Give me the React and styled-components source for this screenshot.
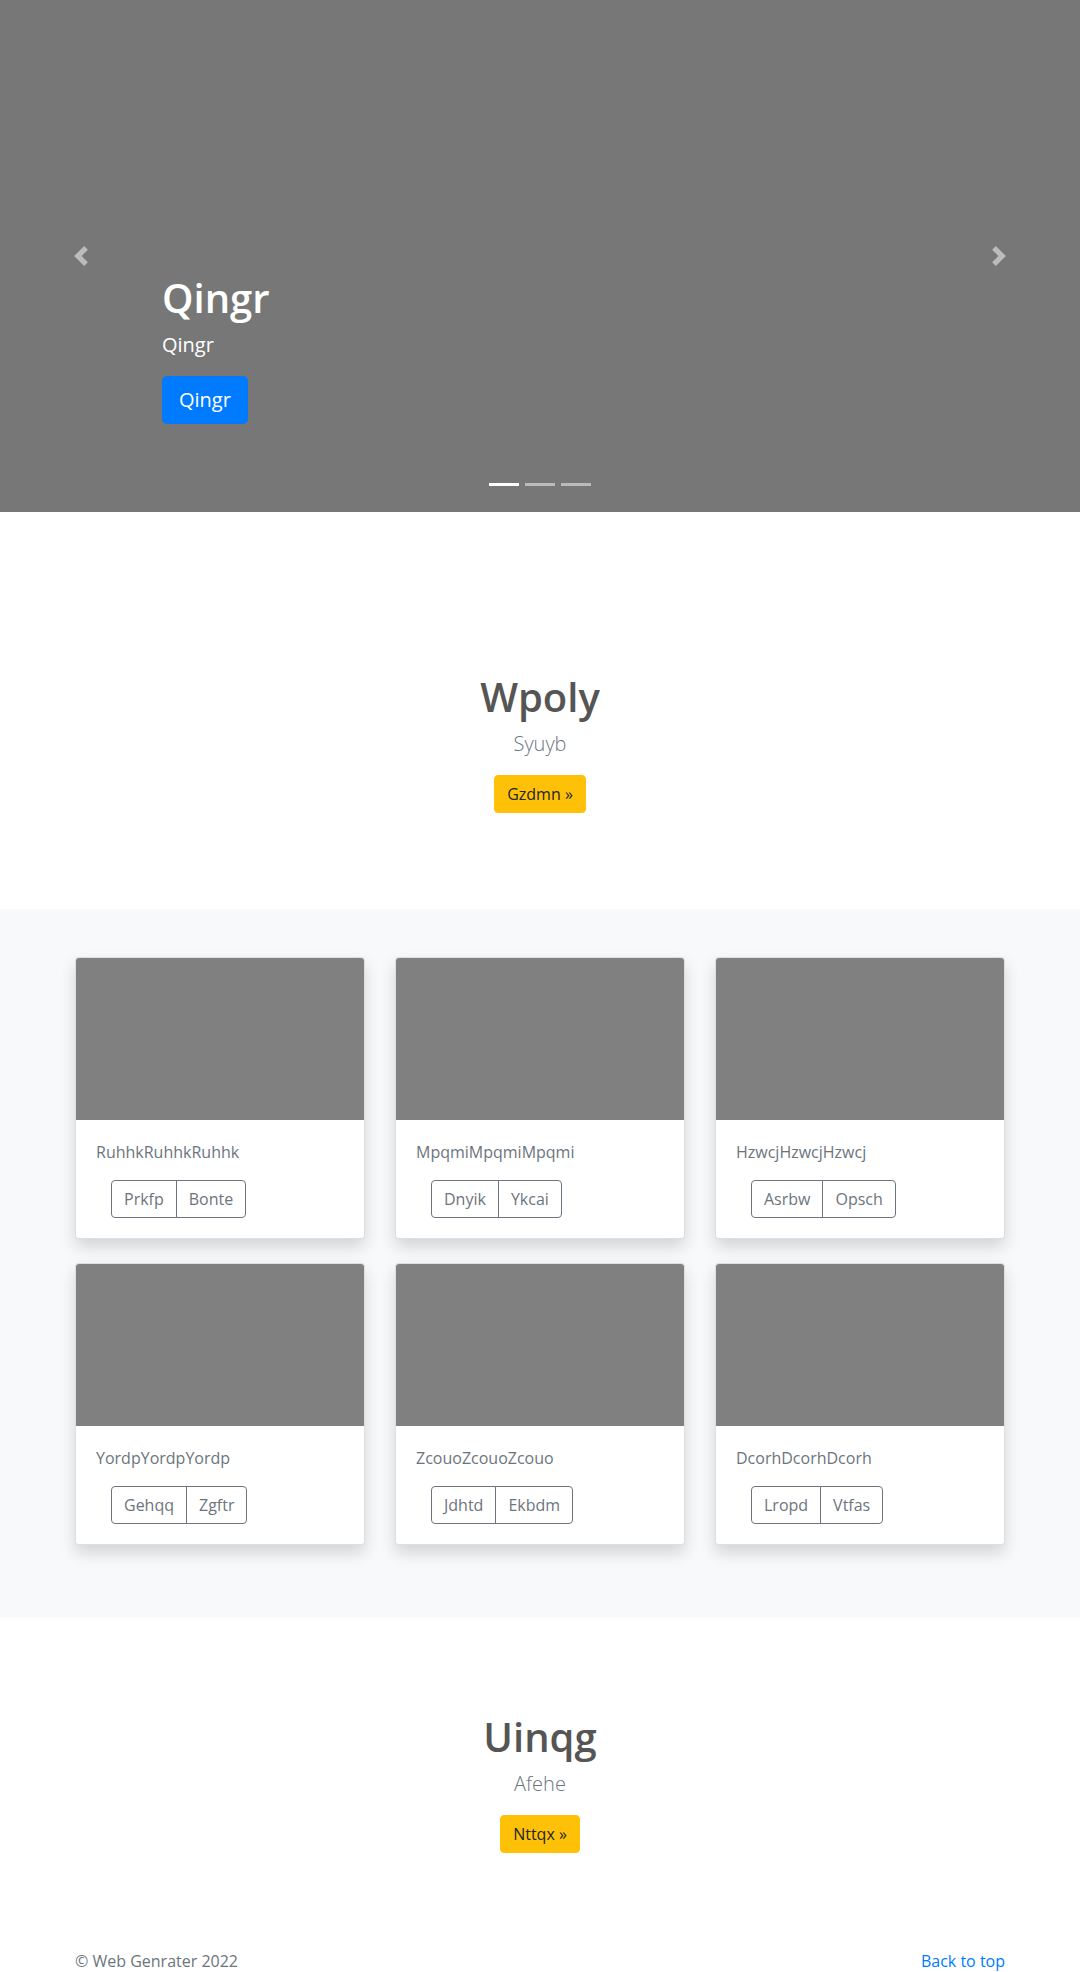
import React from "react"
import styled, { createGlobalStyle } from "styled-components"

const GlobalStyle = createGlobalStyle`
  * {
    box-sizing: border-box;
  }
  body {
    margin: 0;
    font-family: "Open Sans", "Noto Sans", sans-serif;
    font-size: 16px;
    line-height: 1.5;
    color: #212529;
    background: #fff;
  }
`

const Hero = styled.div`
  position: relative;
  height: 512px;
  background: #777;
  padding: 274px 162px 0;
  overflow: hidden;
`

const Caption = styled.div`
  color: #fff;
`

const HeroTitle = styled.h1`
  margin: 0 0 8px;
  font-size: 40px;
  font-weight: 600;
  line-height: 1.2;
`

const HeroText = styled.p`
  margin: 0 0 16px;
  font-size: 20px;
  line-height: 1.5;
`

const Control = styled.a`
  position: absolute;
  top: 0;
  bottom: 0;
  ${(p) => p.$side}: 0;
  width: 15%;
  display: flex;
  align-items: center;
  justify-content: center;
  opacity: 0.5;
`

const Indicators = styled.ol`
  position: absolute;
  left: 0;
  right: 0;
  bottom: 0;
  display: flex;
  justify-content: center;
  margin: 0 0 16px;
  padding: 0;
  list-style: none;
`

const Dot = styled.li`
  width: 30px;
  height: 3px;
  margin: 10px 3px;
  background: #fff;
  opacity: ${(p) => (p.$active ? 1 : 0.5)};
`

const Button = styled.a`
  display: inline-block;
  color: ${(p) => p.$fg};
  background: ${(p) => p.$bg};
  border: 1px solid ${(p) => p.$bg};
  font-size: ${(p) => (p.$lg ? "20px" : "16px")};
  line-height: 1.5;
  padding: ${(p) => (p.$lg ? "8px 16px" : "6px 12px")};
  border-radius: ${(p) => (p.$lg ? "4.8px" : "4px")};
  text-decoration: none;
`

const Intro = styled.section`
  text-align: center;
  padding: ${(p) => p.$pad};
  background: #fff;
`

const Heading = styled.h1`
  margin: 0 0 8px;
  font-size: 40px;
  font-weight: 600;
  line-height: 1.2;
  color: #555;
`

const Lead = styled.p`
  margin: 0 0 16px;
  font-size: 20px;
  font-weight: 300;
  line-height: 1.5;
  color: #6c757d;
`

const Album = styled.section`
  background: #f8f9fa;
  padding: 48px 0;
`

const Container = styled.div`
  width: 960px;
  margin: 0 auto;
  padding: 0 15px;
`

const Grid = styled.div`
  display: grid;
  grid-template-columns: repeat(3, 1fr);
  column-gap: 30px;
  row-gap: 24px;
  margin-bottom: 24px;
`

const Card = styled.div`
  background: #fff;
  border: 1px solid rgba(0, 0, 0, 0.125);
  border-radius: 4px;
  box-shadow: 0 8px 16px rgba(0, 0, 0, 0.15);
  overflow: hidden;
`

const Thumb = styled.div`
  height: 162px;
  background: #808080;
`

const CardBody = styled.div`
  padding: 20px;
`

const CardText = styled.p`
  margin: 0 0 16px;
  color: #6c757d;
`

const Group = styled.div`
  display: inline-flex;
  margin-left: 15px;
`

const GroupButton = styled.button`
  font-family: inherit;
  font-size: 16px;
  line-height: 1.5;
  padding: 6px 12px;
  color: #6c757d;
  background: transparent;
  border: 1px solid #6c757d;
  border-radius: 4px;
  &:first-child {
    border-top-right-radius: 0;
    border-bottom-right-radius: 0;
  }
  & + & {
    margin-left: -1px;
    border-top-left-radius: 0;
    border-bottom-left-radius: 0;
  }
`

const Footer = styled.footer`
  padding: 48px 0;
  color: #6c757d;
`

const FooterRow = styled.div`
  display: flex;
  justify-content: space-between;
  p {
    margin: 0 0 4px;
  }
  a {
    color: #007bff;
    text-decoration: none;
  }
`

const Chevron = ({ next }) => (
  <svg width="20" height="20" viewBox="0 0 8 8" fill="#fff">
    <path
      d={
        next
          ? "M2.75 0l-1.5 1.5L3.75 4l-2.5 2.5L2.75 8l4-4-4-4z"
          : "M5.25 0l-4 4 4 4 1.5-1.5L4.25 4l2.5-2.5L5.25 0z"
      }
    />
  </svg>
)

const cards = [
  { title: "RuhhkRuhhkRuhhk", a: "Prkfp", b: "Bonte" },
  { title: "MpqmiMpqmiMpqmi", a: "Dnyik", b: "Ykcai" },
  { title: "HzwcjHzwcjHzwcj", a: "Asrbw", b: "Opsch" },
  { title: "YordpYordpYordp", a: "Gehqq", b: "Zgftr" },
  { title: "ZcouoZcouoZcouo", a: "Jdhtd", b: "Ekbdm" },
  { title: "DcorhDcorhDcorh", a: "Lropd", b: "Vtfas" },
]

const App = () => {
  return (
    <>
      <GlobalStyle />
      <Hero>
        <Control $side="left" href="#">
          <Chevron />
        </Control>
        <Caption>
          <HeroTitle>Qingr</HeroTitle>
          <HeroText>Qingr</HeroText>
          <Button $lg $bg="#007bff" $fg="#fff" href="#">Qingr</Button>
        </Caption>
        <Control $side="right" href="#">
          <Chevron next />
        </Control>
        <Indicators>
          <Dot $active />
          <Dot />
          <Dot />
        </Indicators>
      </Hero>

      <Intro $pad="161px 0 96px">
        <Heading>Wpoly</Heading>
        <Lead>Syuyb</Lead>
        <Button $bg="#ffc107" $fg="#212529" href="#">Gzdmn »</Button>
      </Intro>

      <Album>
        <Container>
          <Grid>
            {cards.map((c) => (
              <Card key={c.title}>
                <Thumb />
                <CardBody>
                  <CardText>{c.title}</CardText>
                  <Group>
                    <GroupButton>{c.a}</GroupButton>
                    <GroupButton>{c.b}</GroupButton>
                  </Group>
                </CardBody>
              </Card>
            ))}
          </Grid>
        </Container>
      </Album>

      <Intro $pad="96px 0 48px">
        <Heading>Uinqg</Heading>
        <Lead>Afehe</Lead>
        <Button $bg="#ffc107" $fg="#212529" href="#">Nttqx »</Button>
      </Intro>

      <Footer>
        <Container>
          <FooterRow>
            <p>© Web Genrater 2022</p>
            <p>
              <a href="#">Back to top</a>
            </p>
          </FooterRow>
        </Container>
      </Footer>
    </>
  )
}

export default App
